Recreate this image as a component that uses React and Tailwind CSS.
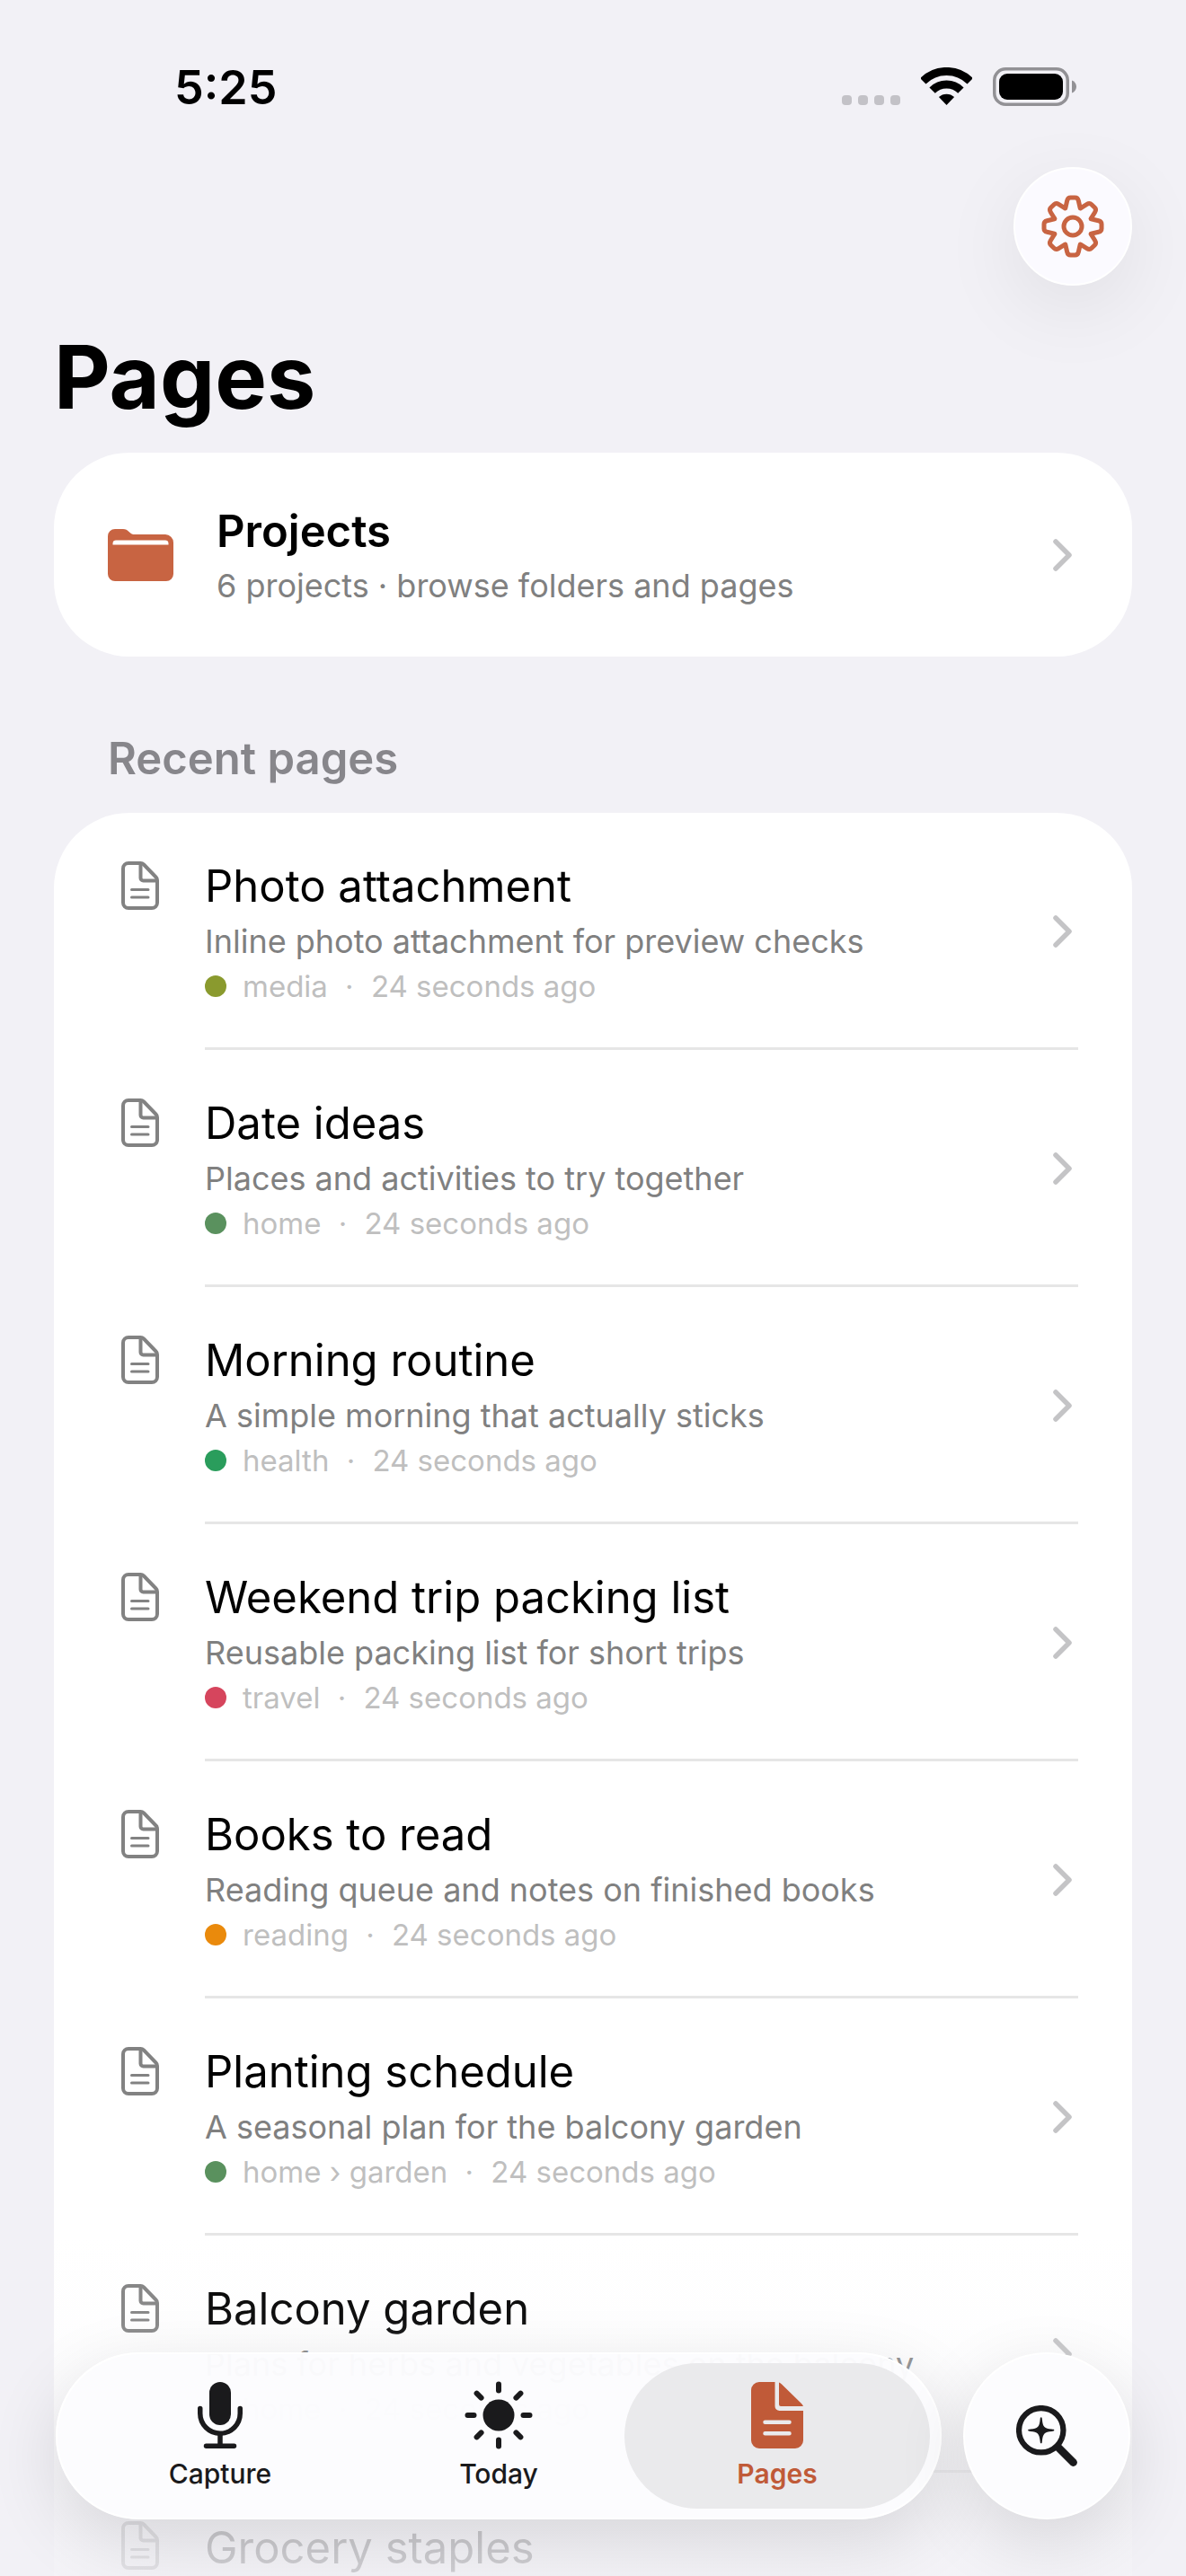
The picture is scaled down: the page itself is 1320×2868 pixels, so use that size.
import clsx from "clsx";

const PAGES = [
  {
    title: "Photo attachment",
    summary: "Inline photo attachment for preview checks",
    project: "media",
    dot: "bg-[#8a9a2e]",
  },
  {
    title: "Date ideas",
    summary: "Places and activities to try together",
    project: "home",
    dot: "bg-[#5a915e]",
  },
  {
    title: "Morning routine",
    summary: "A simple morning that actually sticks",
    project: "health",
    dot: "bg-[#2a9d5c]",
  },
  {
    title: "Weekend trip packing list",
    summary: "Reusable packing list for short trips",
    project: "travel",
    dot: "bg-[#d6455d]",
  },
  {
    title: "Books to read",
    summary: "Reading queue and notes on finished books",
    project: "reading",
    dot: "bg-[#ea8a0c]",
  },
  {
    title: "Planting schedule",
    summary: "A seasonal plan for the balcony garden",
    project: "home › garden",
    dot: "bg-[#5a915e]",
  },
  {
    title: "Balcony garden",
    summary: "Plans for herbs and vegetables on the balcony",
    project: "home",
    dot: "bg-[#5a915e]",
  },
  {
    title: "Grocery staples",
    summary: "Things we always keep in the kitchen",
    project: "home",
    dot: "bg-[#5a915e]",
  },
];

const EIGHTHS = [0, 45, 90, 135, 180, 225, 270, 315];

function WifiIcon() {
  return (
    <svg width="57" height="42" viewBox="0 0 57 42" fill="none" aria-hidden="true">
      <path d="M2.3 15.3a37 37 0 0 1 52.4 0" stroke="#000" strokeWidth="9" />
      <path d="M12.6 25.6a22.5 22.5 0 0 1 31.8 0" stroke="#000" strokeWidth="9" />
      <path d="M28.5 42l-8.6-8.9a12.5 12.5 0 0 1 17.2 0z" fill="#000" />
    </svg>
  );
}

function BatteryIcon() {
  return (
    <svg width="93" height="43" viewBox="0 0 93 43" fill="none" aria-hidden="true">
      <rect x="1.75" y="1.75" width="81.5" height="39.5" rx="12.5" stroke="#929195" strokeWidth="3.5" />
      <rect x="7" y="7" width="71" height="29" rx="9" fill="#000" />
      <path d="M88 14.5c3 1 5 4 5 7s-2 6-5 7z" fill="#929195" />
    </svg>
  );
}

function GearIcon() {
  return (
    <svg width="70" height="70" viewBox="-35 -35 70 70" fill="none" stroke="#c86442" strokeWidth="5" strokeLinecap="round" strokeLinejoin="round" aria-hidden="true">
      <circle r="10" />
      {EIGHTHS.map((angle) => (
        <path
          key={angle}
          transform={`rotate(${angle})`}
          d="M-8.2 -20.4L-6.3 -28.6Q-5.5 -32 -2.4 -32H2.4Q5.5 -32 6.3 -28.6L8.2 -20.4"
        />
      ))}
    </svg>
  );
}

function FolderIcon() {
  return (
    <svg width="73" height="58" viewBox="0 0 73 58" aria-hidden="true">
      <path
        d="M8 0H17C20 0 21.500 1 23.500 3C26 5.500 27.500 6 30 6H64A9 9 0 0 1 73 15V50A8 8 0 0 1 65 58H8A8 8 0 0 1 0 50V8A8 8 0 0 1 8 0Z"
        fill="#c86442"
      />
      <path d="M5.500 17.500V16C5.500 13.500 7 12.500 9 12.500H64C66 12.500 67.500 13.500 67.500 16V17.500Z" fill="#fff" />
    </svg>
  );
}

function DocIcon() {
  return (
    <svg width="42" height="54" viewBox="0 0 42 54" fill="none" stroke="#828282" strokeWidth="4" strokeLinecap="round" strokeLinejoin="round" aria-hidden="true">
      <path d="M8 2H21.500C23 2 24 2.500 25 3.500L38.500 17.500C39.500 18.500 40 19.500 40 21V46A6 6 0 0 1 34 52H8A6 6 0 0 1 2 46V8A6 6 0 0 1 8 2Z" />
      <path d="M21.500 3V18.500A3 3 0 0 0 24.500 21.500H39" />
      <path d="M11.500 31.500H30M11.500 40H30" strokeWidth="3" />
    </svg>
  );
}

function ChevronIcon() {
  return (
    <svg width="21" height="36" viewBox="0 0 21 36" fill="none" stroke="#c4c4c6" strokeWidth="5.500" strokeLinecap="round" strokeLinejoin="round" aria-hidden="true">
      <path d="M3 3L18 18L3 33" />
    </svg>
  );
}

function MicIcon() {
  return (
    <svg width="50" height="76" viewBox="0 0 50 76" fill="none" stroke="#1a1a1c" strokeWidth="5.500" strokeLinecap="round" aria-hidden="true">
      <rect x="13" y="1" width="24" height="48" rx="12" fill="#1a1a1c" stroke="none" />
      <path d="M2.750 30.500V36A22.250 22.250 0 0 0 47.250 36V30.500" />
      <path d="M25 59V71M9.500 72.200H40.500" />
    </svg>
  );
}

function SunIcon() {
  return (
    <svg width="76" height="76" viewBox="-38 -38 76 76" stroke="#1a1a1c" strokeWidth="6" strokeLinecap="round" aria-hidden="true">
      <circle r="17.500" fill="#1a1a1c" stroke="none" />
      {EIGHTHS.map((angle) => (
        <path key={angle} transform={`rotate(${angle})`} d="M0 -34.500V-27.500" />
      ))}
    </svg>
  );
}

function PagesIcon() {
  return (
    <svg width="58" height="76" viewBox="0 -1 58 76" fill="#c05a38" aria-hidden="true">
      <path d="M9 0H26.500V27A5 5 0 0 0 31.500 32H58V65A9 9 0 0 1 49 74H9A9 9 0 0 1 0 65V9A9 9 0 0 1 9 0Z" />
      <path d="M31 0.500C32 0.800 33 1.500 34 2.500L56 24C57 25 57.500 26 58 27H33A2 2 0 0 1 31 25Z" />
      <path d="M15.500 44.700H42.500M15.500 57.300H42.500" stroke="#eaeaec" strokeWidth="4.500" strokeLinecap="round" />
    </svg>
  );
}

function SearchSparkIcon() {
  return (
    <svg width="68" height="68" viewBox="0 0 68 68" fill="none" stroke="#1a1a1c" strokeLinecap="round" aria-hidden="true">
      <circle cx="27.750" cy="27.750" r="24.700" strokeWidth="6.200" />
      <path d="M46.500 46.500L63.500 63.500" strokeWidth="8.800" />
      <path
        d="M27.750 13.200C28.700 13.200 28.700 14 28.900 16C29.700 24 31.500 25.800 39.500 26.600C41.500 26.800 42.300 26.800 42.300 27.750C42.300 28.700 41.500 28.700 39.500 28.900C31.500 29.700 29.700 31.500 28.900 39.500C28.700 41.500 28.700 42.300 27.750 42.300C26.800 42.300 26.800 41.500 26.600 39.500C25.800 31.500 24 29.700 16 28.900C14 28.700 13.200 28.700 13.200 27.750C13.200 26.800 14 26.800 16 26.600C24 25.800 25.800 24 26.600 16C26.800 14 26.800 13.200 27.750 13.200Z"
        fill="#1a1a1c"
        stroke="none"
      />
    </svg>
  );
}

const TABS = [
  { label: "Capture", icon: MicIcon },
  { label: "Today", icon: SunIcon },
  { label: "Pages", icon: PagesIcon, active: true },
];

function StatusBar() {
  return (
    <div className="flex h-[186px] items-start justify-between pt-[66px] pr-[122px] pl-[194px]">
      <span className="text-[52px] leading-[64px] font-semibold">5:25</span>
      <div className="flex items-end gap-[23px] pt-[9px]">
        <div className="flex gap-[7px] pb-px">
          {[0, 1, 2, 3].map((bar) => (
            <span key={bar} className="size-[11px] rounded-[4px] bg-[#c3c2c7]" />
          ))}
        </div>
        <div className="pb-px">
          <WifiIcon />
        </div>
        <BatteryIcon />
      </div>
    </div>
  );
}

function PageRow({ page, last }) {
  return (
    <li>
      <a href="#" className="flex h-[264px] pr-[60px] pl-[75px]">
        <span className="w-[93px] shrink-0 pt-[54px]">
          <DocIcon />
        </span>
        <span
          className={clsx(
            "flex min-w-0 flex-1 items-center justify-between pt-[3px] pr-[7px]",
            !last && "border-b-[3px] border-[#e6e6e6]"
          )}
        >
          <span className="flex min-w-0 flex-col">
            <span className="truncate text-[49px] leading-[66px]">{page.title}</span>
            <span className="truncate text-[36px] leading-[56px] text-[#808080]">{page.summary}</span>
            <span className="flex items-center text-[33px] leading-[44px] text-[#bfbfbf]">
              <span className={clsx("mr-[18px] size-6 rounded-full", page.dot)} />
              <span>{page.project}</span>
              <span className="w-12 text-center">·</span>
              <span>24 seconds ago</span>
            </span>
          </span>
          <ChevronIcon />
        </span>
      </a>
    </li>
  );
}

function TabBar() {
  return (
    <div className="absolute inset-x-[62px] bottom-[63px] flex gap-6">
      <nav className="grid h-[186px] flex-1 grid-cols-3 rounded-full border-2 border-white bg-[#fcfcfe]/97 px-[26px] py-[10px] shadow-[0_24px_80px_rgba(0,0,0,0.12)]">
        {TABS.map(({ label, icon: Icon, active }) => (
          <button
            key={label}
            type="button"
            className={clsx(
              "-mx-[15px] flex flex-col items-center gap-[9px] rounded-full pt-[20px] text-[30px] leading-[36px]",
              active ? "bg-[#eaeaec] font-semibold text-[#c05a38]" : "font-medium text-[#1a1a1c]"
            )}
          >
            <Icon />
            {label}
          </button>
        ))}
      </nav>
      <button
        type="button"
        aria-label="Search"
        className="flex size-[186px] items-center justify-center rounded-full border-2 border-white bg-[#fcfcfe] shadow-[0_24px_80px_rgba(0,0,0,0.12)]"
      >
        <SearchSparkIcon />
      </button>
    </div>
  );
}

export default function App() {
  return (
    <div className="relative h-screen overflow-hidden bg-[#f2f1f6] font-['Inter',sans-serif] text-black">
      <div className="h-full overflow-y-auto [scrollbar-width:none]">
        <StatusBar />

        <header className="px-[60px]">
          <div className="flex justify-end">
            <button
              type="button"
              aria-label="Settings"
              className="flex size-[132px] items-center justify-center rounded-full border-2 border-white bg-[#fbfaff] shadow-[0_24px_90px_rgba(0,0,0,0.08)]"
            >
              <GearIcon />
            </button>
          </div>
          <h1 className="pt-[42px] text-[97px] leading-[120px] font-bold">Pages</h1>
        </header>

        <main className="px-[60px] pt-6">
          <a href="#" className="flex h-[227px] items-center rounded-[84px] bg-white pr-[67px] pl-[60px]">
            <FolderIcon />
            <span className="flex flex-1 flex-col pt-1 pl-[48px]">
              <span className="text-[49px] leading-[64px] font-semibold">Projects</span>
              <span className="text-[36px] leading-[56px] text-[#808080]">
                6 projects · browse folders and pages
              </span>
            </span>
            <ChevronIcon />
          </a>

          <h2 className="px-[60px] pt-[82px] pb-[28px] text-[49px] leading-[64px] font-semibold text-[#87868b]">
            Recent pages
          </h2>

          <ul className="rounded-[84px] bg-white">
            {PAGES.map((page, i) => (
              <PageRow key={page.title} page={page} last={i === PAGES.length - 1} />
            ))}
          </ul>
        </main>
      </div>

      {/* list fades out behind the tab bar */}
      <div className="pointer-events-none absolute inset-x-0 bottom-0 h-[380px] bg-[linear-gradient(to_bottom,rgba(242,241,246,0)_0%,rgba(242,241,246,0.07)_25%,rgba(242,241,246,0.2)_38%,rgba(242,241,246,0.5)_60%,rgba(242,241,246,0.81)_82%,rgba(242,241,246,0.86)_100%)]" />
      <TabBar />
    </div>
  );
}
